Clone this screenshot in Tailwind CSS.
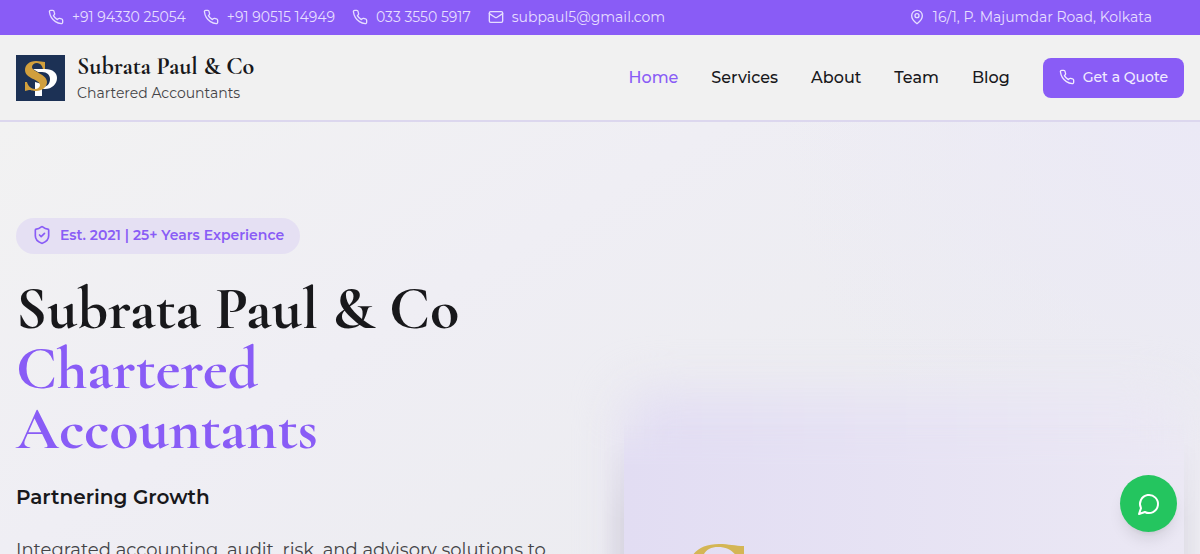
<!DOCTYPE html>
<html lang="en">
  <head>
    <meta charset="UTF-8" />
    <meta name="viewport" content="width=device-width, initial-scale=1.0" />
    <title>Subrata Paul &amp; Co - Chartered Accountants</title>
    <script src="https://cdn.jsdelivr.net/npm/@tailwindcss/browser@4"></script>
  </head>
  <body
    class="h-screen overflow-hidden bg-[#f1f1f1] font-['Montserrat','Inter',sans-serif] text-[#18181b]"
  >
    <!-- Shared icons -->
    <svg class="hidden" aria-hidden="true">
      <symbol id="phone" viewBox="0 0 24 24">
        <path
          d="M22 16.92v3a2 2 0 0 1-2.18 2 19.79 19.79 0 0 1-8.63-3.07 19.5 19.5 0 0 1-6-6 19.79 19.79 0 0 1-3.07-8.67A2 2 0 0 1 4.11 2h3a2 2 0 0 1 2 1.72 12.84 12.84 0 0 0 .7 2.81 2 2 0 0 1-.45 2.11L8.09 9.91a16 16 0 0 0 6 6l1.27-1.27a2 2 0 0 1 2.11-.45 12.84 12.84 0 0 0 2.81.7A2 2 0 0 1 22 16.92z"
        />
      </symbol>
    </svg>

    <!-- Top bar -->
    <div
      class="flex h-[35px] items-center justify-between bg-[#895cf6] px-12 pb-0.5 text-sm text-[#e6deff]"
    >
      <div class="flex items-center gap-[17px]">
        <a href="tel:+919433025054" class="flex items-center gap-2">
          <svg class="size-4 fill-none stroke-current stroke-2" stroke-linecap="round" stroke-linejoin="round"><use href="#phone" /></svg>
          +91 94330 25054
        </a>
        <a href="tel:+919051514949" class="flex items-center gap-2">
          <svg class="size-4 fill-none stroke-current stroke-2" stroke-linecap="round" stroke-linejoin="round"><use href="#phone" /></svg>
          +91 90515 14949
        </a>
        <a href="tel:03335505917" class="flex items-center gap-2">
          <svg class="size-4 fill-none stroke-current stroke-2" stroke-linecap="round" stroke-linejoin="round"><use href="#phone" /></svg>
          033 3550 5917
        </a>
        <a href="mailto:subpaul5@gmail.com" class="flex items-center gap-2">
          <svg class="size-4 fill-none stroke-current stroke-2" viewBox="0 0 24 24" stroke-linecap="round" stroke-linejoin="round">
            <rect width="20" height="16" x="2" y="4" rx="2" />
            <path d="m22 7-8.97 5.7a1.94 1.94 0 0 1-2.06 0L2 7" />
          </svg>
          subpaul5@gmail.com
        </a>
      </div>
      <div class="flex items-center gap-2">
        <svg class="size-4 fill-none stroke-current stroke-2" viewBox="0 0 24 24" stroke-linecap="round" stroke-linejoin="round">
          <path d="M20 10c0 6-8 12-8 12s-8-6-8-12a8 8 0 0 1 16 0Z" />
          <circle cx="12" cy="10" r="3" />
        </svg>
        16/1, P. Majumdar Road, Kolkata
      </div>
    </div>

    <!-- Header -->
    <header
      class="flex h-[87px] items-center justify-between border-b-2 border-[#dcd7ee] bg-[#f1f1f1] px-4"
    >
      <a href="#" class="flex items-center gap-3">
        <svg class="h-[46px] w-[49px]" viewBox="0 0 49 46" role="img" aria-label="SP logo">
          <rect width="49" height="46" fill="#1c3155" />
          <path d="M17 14h12c8 0 12 4 12 9 0 6-5 11-12 11h-3v-2c5 0 8-3 8-8 0-4-3-7-8-7h-4z" fill="#fff" />
          <path d="M19 27l7 2v12h-7z" fill="#fff" />
          <path d="M29 7v7h-2c-1-4-3-6-6-6-3 0-5 2-5 4 0 5 15 7 15 15 0 5-5 9-11 9-4 0-5-1-7-1l-4 1v-9h2c1 4 4 7 8 7 3 0 5-2 5-4 0-6-15-6-15-15 0-5 4-9 11-9 4 0 6 1 9 1z" fill="#d19f3d" />
        </svg>
        <div>
          <div class="font-['Cormorant_Garamond','Liberation_Serif',serif] text-2xl leading-8 font-bold">
            Subrata Paul &amp; Co
          </div>
          <div class="pb-0.5 text-sm text-[#444447]">Chartered Accountants</div>
        </div>
      </a>
      <nav class="flex items-center gap-[33px] font-medium">
        <a href="#" class="text-[#895cf6]">Home</a>
        <a href="#">Services</a>
        <a href="#">About</a>
        <a href="#">Team</a>
        <a href="#">Blog</a>
        <button
          type="button"
          class="flex h-10 items-center gap-2 rounded-lg bg-[#895cf6] px-4 pb-0.5 text-sm font-medium text-[#f1ebff]"
        >
          <svg class="size-4 fill-none stroke-current stroke-2" stroke-linecap="round" stroke-linejoin="round"><use href="#phone" /></svg>
          Get a Quote
        </button>
      </nav>
    </header>

    <!-- Hero -->
    <main
      class="grid grid-cols-2 gap-12 bg-[radial-gradient(circle_at_100%_0,#ebe9f6_0,transparent_30%),linear-gradient(to_bottom_right,#f2f2f2,#efeef4_30%,#ececf0_60%)] px-4 pt-24"
    >
      <section>
        <div
          class="inline-flex h-9 items-center gap-2 rounded-full bg-[#e5e0f3] px-4 pb-0.5 text-sm font-semibold text-[#895cf6]"
        >
          <svg class="size-5 fill-none stroke-current stroke-2" viewBox="0 0 24 24" stroke-linecap="round" stroke-linejoin="round">
            <path d="M20 13c0 5-3.500 7.500-7.660 8.950a1 1 0 0 1-.67-.01C7.500 20.500 4 18 4 13V6a1 1 0 0 1 1-1c2 0 4.500-1.200 6.240-2.720a1.170 1.170 0 0 1 1.520 0C14.510 3.810 17 5 19 5a1 1 0 0 1 1 1z" />
            <path d="m9 12 2 2 4-4" />
          </svg>
          Est. 2021 | 25+ Years Experience
        </div>
        <h1
          class="mt-[25px] font-['Cormorant_Garamond','Liberation_Serif',serif] text-6xl leading-[60px] font-bold"
        >
          Subrata Paul &amp; Co
          <span class="block text-[#895cf6]">Chartered<br />Accountants</span>
        </h1>
        <p class="mt-6 text-xl font-semibold">Partnering Growth</p>
        <p class="mt-[25px] text-lg text-[#444447]">
          Integrated accounting, audit, risk, and advisory solutions to
          strengthen your business.
        </p>
      </section>

      <section class="relative mt-[206px]">
        <div class="absolute inset-x-0 -top-8 bottom-0 rounded-3xl bg-linear-to-r from-[#e2ddf3] to-[#ebe8f4] blur-xl"></div>
        <div
          class="relative h-[420px] bg-linear-to-r from-[#e2ddf3] to-[#ebe8f4] mask-linear-180 mask-linear-from-transparent mask-linear-from-0% mask-linear-to-black mask-linear-to-10% px-16 pt-[120px]"
        >
          <svg class="h-[92px] w-16" viewBox="0 0 64 92" fill="#d4b655" aria-hidden="true">
            <path d="M56 2v24h-2C51 12 44 3 30 3 20 3 14 9 14 18c0 22 48 22 48 48 0 15-13 25-31 25-10 0-16-3-22-3l-6 3V62h2c4 16 13 26 27 26 10 0 17-6 17-15C49 50 1 50 1 24 1 9 13 0 31 0c10 0 16 2 25 2z" />
          </svg>
        </div>
        <!-- Side shadows of the card -->
        <div class="absolute top-4 bottom-0 -left-6 w-6 bg-linear-to-l from-black/6 to-transparent mask-t-from-80%"></div>
        <div class="absolute top-4 -right-4 bottom-0 w-4 bg-linear-to-r from-black/4 to-transparent mask-t-from-80%"></div>
      </section>
    </main>

    <a
      href="#"
      aria-label="Chat with us"
      class="fixed right-[23px] bottom-[22px] flex size-[57px] items-center justify-center rounded-full bg-[#24c55f] text-white shadow-lg"
    >
      <svg class="size-6 fill-none stroke-current stroke-2" viewBox="0 0 24 24" stroke-linecap="round" stroke-linejoin="round">
        <path d="M7.900 20A9 9 0 1 0 4 16.100L2 22Z" />
      </svg>
    </a>
  </body>
</html>
